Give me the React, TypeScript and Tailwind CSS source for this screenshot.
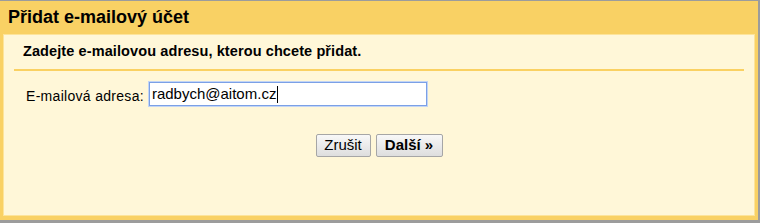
import React from 'react';

const App: React.FC = () => {
  return (
    <div
      className="w-[760px] h-[223px] flex flex-col border-t border-r-2 border-b-[3px] border-[#9c9c9c] bg-[#f9d164] px-[3px] pb-[4px] text-[#222]"
      style={{ fontFamily: '"Liberation Sans", Arial, sans-serif' }}
    >
      {/* header */}
      <div className="h-[33px] flex items-center pl-[5px] text-[18px] font-bold text-black">
        Přidat e-mailový účet
      </div>

      {/* body */}
      <div className="flex-1 flex flex-col bg-[#fff7d8] border border-[#fde49a]">
        <div className="pt-[8px] pl-[19px] text-[14.5px] leading-[17px] font-bold tracking-[0.1px] text-black">
          Zadejte e-mailovou adresu, kterou chcete přidat.
        </div>
        <div className="mt-[9px] mx-[10px] h-[2px] bg-[#fad162]" />

        <div className="mt-[11px] flex items-center pl-[22px]">
          <label className="text-[14px] leading-[16px] tracking-[0.3px] text-black mr-[5px] mt-[3px]">E-mailová adresa:</label>
          <div className="w-[278px] h-[24px] flex items-center bg-white border border-[#7ba0e6] shadow-[0_0_0_1px_#c3d5f5] pl-[2px] text-[15px] text-black">
            <span>radbych@aitom.cz</span>
            <span className="w-px h-[17px] bg-black ml-px" />
          </div>
        </div>

        <div className="mt-[28px] flex justify-center gap-[5px]">
          <button className="h-[23px] w-[55px] flex items-center justify-center rounded-[2px] border border-[#a6a6a6] bg-gradient-to-b from-[#f8f8f8] to-[#dedede] text-[15px] text-black">
            Zrušit
          </button>
          <button className="h-[23px] w-[67px] flex items-center justify-center rounded-[2px] border border-[#a6a6a6] bg-gradient-to-b from-[#f8f8f8] to-[#dedede] text-[15px] font-bold text-black">
            Další »
          </button>
        </div>
      </div>
    </div>
  );
};

export default App;
